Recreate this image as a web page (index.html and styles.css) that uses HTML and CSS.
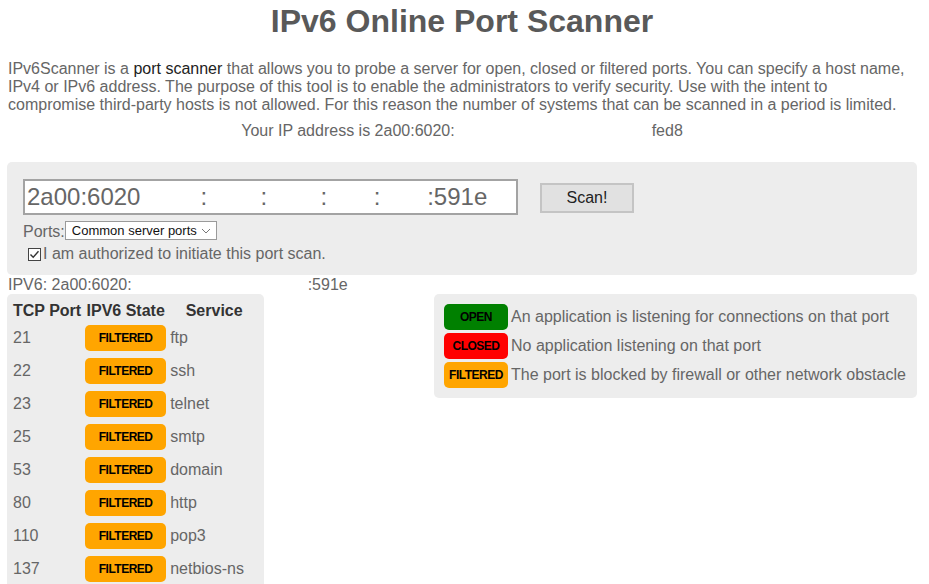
FILE: index.html
```html
<!DOCTYPE html>
<html lang="en">
<head>
<meta charset="utf-8">
<title>IPv6 Online Port Scanner</title>
<link rel="stylesheet" href="styles.css">
</head>
<body>
<div class="page">
  <h1 class="title">IPv6 Online Port Scanner</h1>
  <p class="intro">IPv6Scanner is a <a class="link" href="#">port scanner</a> that allows you to probe a server for open, closed or filtered ports. You can specify a host name, IPv4 or IPv6 address. The purpose of this tool is to enable the administrators to verify security. Use with the intent to compromise third-party hosts is not allowed. For this reason the number of systems that can be scanned in a period is limited.</p>
  <p class="your-ip">Your IP address is 2a00:6020:<span class="gap gap-ip"></span>fed8</p>

  <form class="scan-form">
    <div class="host-row">
      <input class="host-input" type="text" value="2a00:6020         :        :        :       :       :591e">
      <button class="scan-btn" type="button">Scan!</button>
    </div>
    <div class="ports-row">
      <span class="ports-label">Ports:</span><span class="select-wrap"><select class="ports-select"><option>Common server ports</option></select><svg class="chev" width="10" height="6" viewBox="0 0 10 6"><path d="M1 1l4 4 4-4" fill="none" stroke="#777" stroke-width="1"/></svg></span>
    </div>
    <label class="auth-row">
      <svg class="check" width="13" height="13" viewBox="0 0 13 13"><rect x="0.5" y="0.5" width="12" height="12" fill="#fff" stroke="#444"/><path d="M2.5 6.5l2.7 2.8 5.3-6" fill="none" stroke="#333" stroke-width="1.4"/></svg>I am authorized to initiate this port scan.
    </label>
  </form>

  <div class="target">IPV6: 2a00:6020:<span class="gap gap-target"></span>:591e</div>

  <div class="results">
    <div class="panel table-panel">
      <table class="ports">
        <thead>
          <tr><th class="c-port">TCP Port</th><th class="c-state">IPV6 State</th><th class="c-svc">Service</th></tr>
        </thead>
        <tbody>
          <tr><td class="c-port">21</td><td class="c-state"><span class="badge filtered">FILTERED</span></td><td class="c-svc">ftp</td></tr>
          <tr><td class="c-port">22</td><td class="c-state"><span class="badge filtered">FILTERED</span></td><td class="c-svc">ssh</td></tr>
          <tr><td class="c-port">23</td><td class="c-state"><span class="badge filtered">FILTERED</span></td><td class="c-svc">telnet</td></tr>
          <tr><td class="c-port">25</td><td class="c-state"><span class="badge filtered">FILTERED</span></td><td class="c-svc">smtp</td></tr>
          <tr><td class="c-port">53</td><td class="c-state"><span class="badge filtered">FILTERED</span></td><td class="c-svc">domain</td></tr>
          <tr><td class="c-port">80</td><td class="c-state"><span class="badge filtered">FILTERED</span></td><td class="c-svc">http</td></tr>
          <tr><td class="c-port">110</td><td class="c-state"><span class="badge filtered">FILTERED</span></td><td class="c-svc">pop3</td></tr>
          <tr><td class="c-port">137</td><td class="c-state"><span class="badge filtered">FILTERED</span></td><td class="c-svc">netbios-ns</td></tr>
          <tr><td class="c-port">139</td><td class="c-state"><span class="badge filtered">FILTERED</span></td><td class="c-svc">netbios-ssn</td></tr>
        </tbody>
      </table>
    </div>

    <div class="panel legend">
      <div class="legend-row"><span class="badge small open">OPEN</span><span>An application is listening for connections on that port</span></div>
      <div class="legend-row"><span class="badge small closed">CLOSED</span><span>No application listening on that port</span></div>
      <div class="legend-row"><span class="badge small filtered">FILTERED</span><span>The port is blocked by firewall or other network obstacle</span></div>
    </div>
  </div>
</div>
</body>
</html>
```

FILE: styles.css
```css
html, body {
  margin: 0;
  padding: 0;
  background: #fff;
}

body {
  font-family: "Liberation Sans", Arial, sans-serif;
  font-size: 16px;
  color: #666;
}

.page {
  padding: 0 12px 0 7px;
}

.title {
  margin: 3px 0 0;
  font-size: 32px;
  font-weight: bold;
  color: #595959;
  text-align: center;
}

.intro {
  margin: 20px 0 0 1px;
  line-height: 18px;
}

.link {
  color: #222;
  text-decoration: none;
}

.your-ip {
  margin: 8px 0 0;
  text-align: center;
}

.gap {
  display: inline-block;
}

.gap-ip { width: 197px; }
.gap-target { width: 176px; }

/* scan form */
.scan-form {
  margin-top: 22px;
  background: #ededed;
  border-radius: 5px;
  padding: 17px 16px 12px;
}

.host-row {
  display: flex;
  align-items: center;
  gap: 22px;
}

.host-input {
  box-sizing: border-box;
  width: 495px;
  height: 36px;
  border: 2px solid #a3a3a3;
  padding: 0 2px;
  font-family: "Liberation Sans", Arial, sans-serif;
  font-size: 24px;
  color: #666;
  background: #fff;
  outline: none;
  white-space: pre;
}

.scan-btn {
  box-sizing: border-box;
  width: 94px;
  height: 30px;
  margin-top: 2px;
  background: #e1e1e1;
  border: 2px solid #c4c4c4;
  border-radius: 0;
  font-family: "Liberation Sans", Arial, sans-serif;
  font-size: 16px;
  color: #222;
  padding: 0;
}

.ports-row {
  margin-top: 5px;
  display: flex;
  align-items: flex-end;
  height: 20px;
}

.ports-label {
  line-height: 16px;
}

.select-wrap {
  position: relative;
  display: inline-block;
}

.ports-select {
  appearance: none;
  -webkit-appearance: none;
  box-sizing: border-box;
  width: 152px;
  height: 19px;
  border: 1px solid #9a9a9a;
  border-radius: 0;
  background: #fff;
  padding: 0 0 0 6px;
  font-family: "Liberation Sans", Arial, sans-serif;
  font-size: 13px;
  color: #111;
  display: block;
}

.chev {
  position: absolute;
  right: 6px;
  top: 7px;
  pointer-events: none;
}

.auth-row {
  display: flex;
  align-items: center;
  margin-top: 5px;
  padding-left: 5px;
  height: 18px;
}

.check {
  display: block;
  margin-right: 2px;
}

.target {
  margin: 1px 0 0 1px;
  height: 18px;
  line-height: 18px;
}

/* results */
.results {
  display: flex;
  justify-content: space-between;
  align-items: flex-start;
}

.panel {
  background: #ededed;
  border-radius: 5px;
}

.table-panel {
  width: 257px;
  padding-top: 6px;
}

.ports {
  border-collapse: collapse;
  border-spacing: 0;
  white-space: nowrap;
}

.ports th {
  height: 21px;
  padding: 0 2px;
  font-weight: bold;
  color: #333;
  text-align: center;
}

.ports td {
  height: 33px;
  padding: 0 2px;
}

.ports .c-port {
  padding-left: 6px;
  width: 68px;
  text-align: left;
}

.ports .c-state {
  width: 81px;
}

.ports .c-svc {
  width: 88px;
}

.ports th.c-svc {
  text-align: center;
}

.badge {
  box-sizing: border-box;
  display: flex;
  align-items: center;
  justify-content: center;
  width: 81px;
  height: 26px;
  border-radius: 5px;
  font-family: "Liberation Sans", Arial, sans-serif;
  font-size: 12px;
  font-weight: bold;
  letter-spacing: -0.5px;
  color: #000;
}

.badge.small {
  width: 64px;
  flex: none;
}

.filtered { background: #ffa500; }
.open { background: #008000; }
.closed { background: #ff0000; }

.legend {
  width: 483px;
  box-sizing: border-box;
  padding: 10px;
  display: flex;
  flex-direction: column;
  gap: 3px;
}

.legend-row {
  display: flex;
  align-items: center;
  gap: 3px;
}
```
